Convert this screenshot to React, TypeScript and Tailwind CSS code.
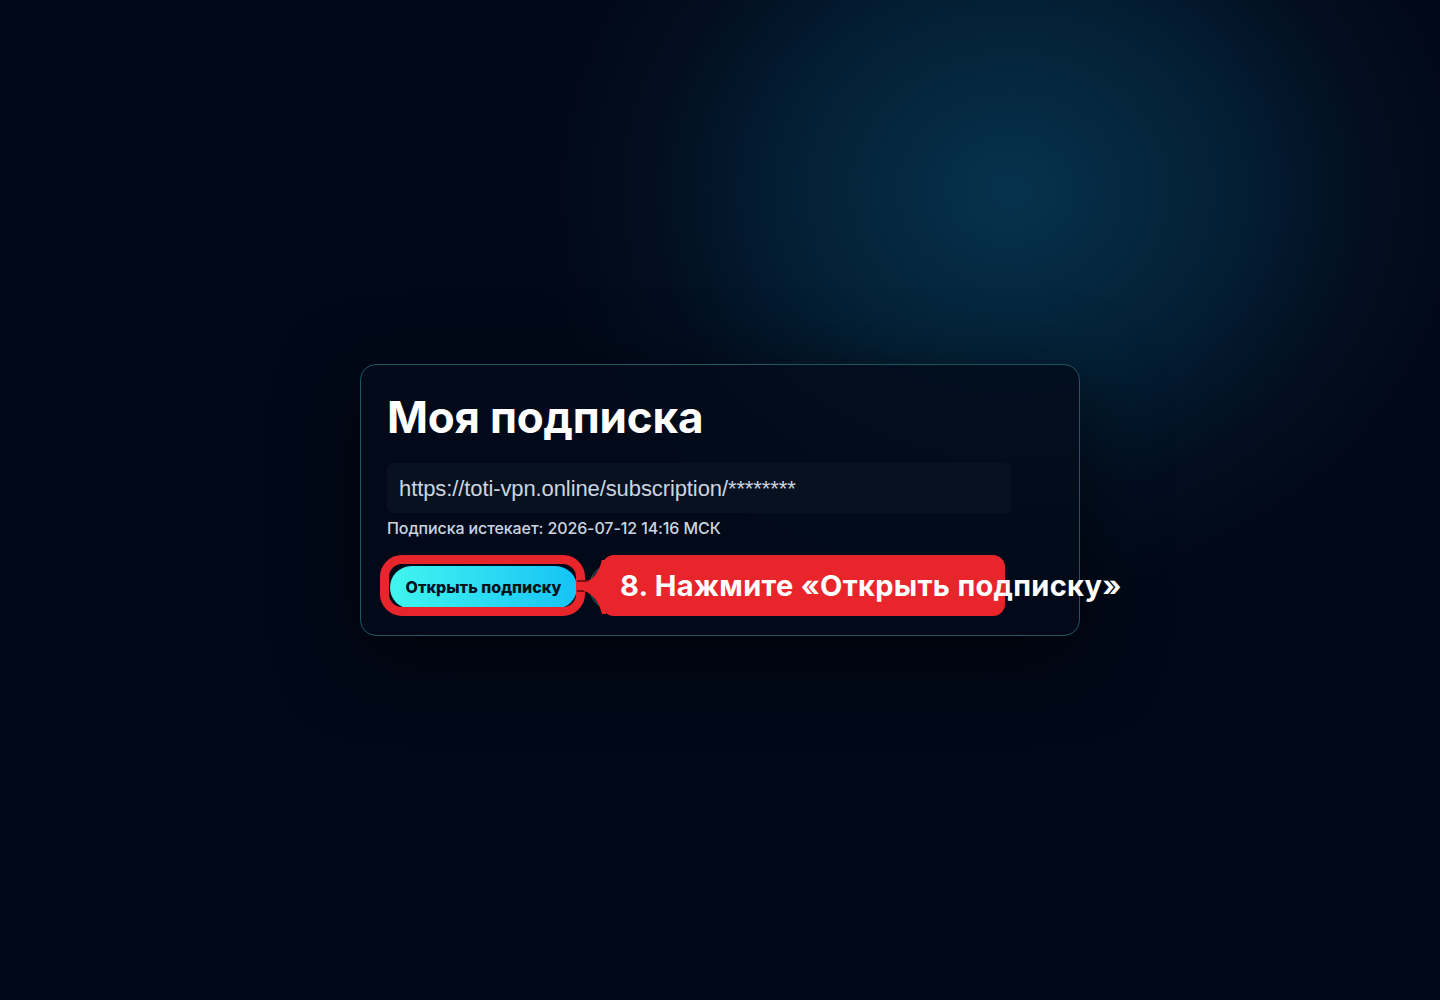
import React from "react";

export default function App() {
  return (
    <div
      className="relative w-[1440px] h-[1000px] overflow-hidden bg-[#010817]"
      style={{ fontFamily: "Inter, 'Noto Sans', sans-serif" }}
    >
      <div className="absolute inset-0 bg-[radial-gradient(ellipse_480px_420px_at_1010px_190px,#06324d_0%,#042238_40%,#020e20_75%,#010817_100%)]" />
      <div className="relative flex justify-center pt-[364px]">
        <div className="w-[720px] h-[272px] rounded-[16px] border border-[#1c5660] bg-[#020b1acc] shadow-[0_20px_80px_rgba(0,0,0,0.6)] px-[26px] pt-[24px]">
          <h1 className="text-[44px] leading-[56px] font-bold text-white tracking-[-0.2px]">Моя подписка</h1>
          <div className="mt-[18px] w-[624px] h-[50px] rounded-[6px] bg-[#08111f] flex items-center px-[12px]">
            <span className="text-[22px] tracking-[-0.1px] text-[#cbd5e1]" style={{ fontFamily: "'Liberation Sans', Arial, sans-serif" }}>
              https://toti-vpn.online/subscription/********
            </span>
          </div>
          <div className="mt-[5px] text-[16px] leading-[20px] font-medium tracking-[-0.1px] text-[#cbd5e1]">Подписка истекает: 2026-07-12 14:16 МСК</div>
          <div className="relative mt-[26px] flex items-center gap-[12px] pl-[3px]">
            <button className="w-[187px] h-[43px] rounded-full bg-gradient-to-r from-[#41f5ee] to-[#15c3f5] text-[16px] font-extrabold text-[#04121f]">
              Открыть подписку
            </button>
            <div className="w-[46px] h-[46px] rounded-full bg-[#132330] border border-[#2f5a66]" />
            {/* annotation ring */}
            <div className="absolute left-[-7px] top-[-9px] w-[205px] h-[61px] rounded-[22px] border-[9px] border-[#e8252a]" />
            {/* connector */}
            <div className="absolute left-[190px] top-[16px] w-[22px] h-[12px] bg-[#e8252a] border-y-2 border-[#7a1015]" />
            <svg className="absolute left-[197px] top-[-8px]" width="30" height="62" viewBox="0 0 30 62">
              <path d="M0,27 C9,24 15,16 18,4 L22,4 L22,58 L18,58 C15,46 9,38 0,35 Z" fill="#e8252a" />
            </svg>
            {/* callout */}
            <div className="absolute left-[215px] top-[-9px] w-[403px] h-[61px] rounded-[12px] bg-[#e8252a] flex items-center pl-[18px] whitespace-nowrap overflow-visible">
              <span className="text-[29px] font-bold text-white tracking-[0.3px]">
                8. Нажмите «Открыть подписку»
              </span>
            </div>
          </div>
        </div>
      </div>
    </div>
  );
}
